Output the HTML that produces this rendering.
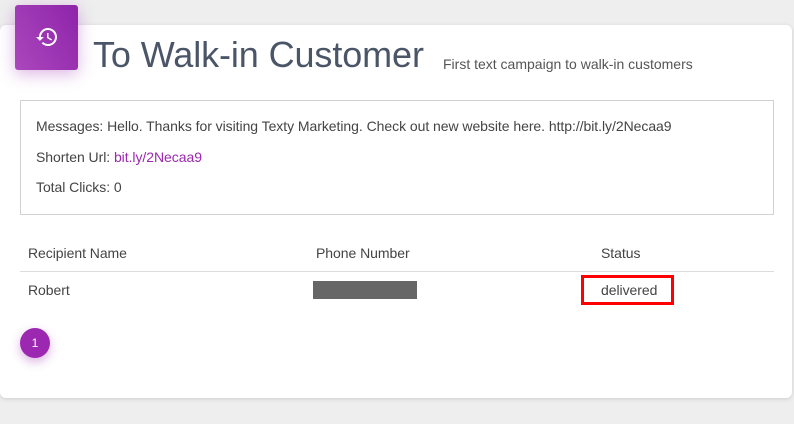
<!DOCTYPE html>
<html><head><meta charset="utf-8"><style>
*{margin:0;padding:0;box-sizing:border-box}
body{width:794px;height:424px;background:#eeeeee;font-family:"Liberation Sans",sans-serif;position:relative;overflow:hidden;color:#3c3c3c}
.card{position:absolute;left:0;top:25px;width:792px;height:373px;background:#fff;border-radius:6px;box-shadow:0 1px 4px rgba(0,0,0,.14)}
.ic{position:absolute;left:15px;top:5px;width:63px;height:65px;border-radius:3px;background:linear-gradient(60deg,#ab47bc,#8e24aa);box-shadow:0 4px 16px rgba(156,39,176,.35)}
.t{position:absolute;white-space:nowrap}
.box{position:absolute;left:20px;top:100px;width:754px;height:115px;border:1px solid #d2d2d2}
.s{font-size:14px;letter-spacing:-0.05px;color:#444}
</style></head><body>
<div class="card"></div>
<div class="ic"><svg width="63" height="65" viewBox="0 0 63 65"><g transform="translate(20,20)" fill="#fff"><path d="M13 3a9 9 0 0 0-9 9H1l3.9 3.9L8.9 12H6a7 7 0 1 1 2.05 4.95l-1.42 1.42A9 9 0 1 0 13 3zm-1 5v5l4.28 2.54.72-1.21-3.5-2.08V8z"/></g></svg></div>
<div class="t" style="left:93px;top:34px;font-size:36px;color:#4a5668;letter-spacing:-0.1px;font-weight:300">To Walk-in Customer</div>
<div class="t" style="left:443px;top:56px;font-size:14px;color:#555">First text campaign to walk-in customers</div>
<div class="box"></div>
<div class="t s" style="left:36px;top:118px">Messages: Hello. Thanks for visiting Texty Marketing. Check out new website here. http://bit.ly/2Necaa9</div>
<div class="t s" style="left:36px;top:149px">Shorten Url: <span style="color:#9c27b0">bit.ly/2Necaa9</span></div>
<div class="t s" style="left:36px;top:179px">Total Clicks: 0</div>
<div class="t s" style="left:28px;top:245px">Recipient Name</div>
<div class="t s" style="left:316px;top:245px">Phone Number</div>
<div class="t s" style="left:601px;top:245px">Status</div>
<div style="position:absolute;left:20px;top:271px;width:754px;height:1px;background:#ddd"></div>
<div class="t s" style="left:28px;top:282px">Robert</div>
<div style="position:absolute;left:313px;top:281px;width:104px;height:18px;background:#666"></div>
<div style="position:absolute;left:581px;top:275px;width:93px;height:30px;border:3px solid #f00"></div>
<div class="t s" style="left:601px;top:282px">delivered</div>
<div style="position:absolute;left:20px;top:328px;width:30px;height:30px;border-radius:50%;background:#9c27b0;box-shadow:0 4px 10px rgba(156,39,176,.35);color:#fff;font-size:12px;text-align:center;line-height:30px">1</div>
</body></html>
